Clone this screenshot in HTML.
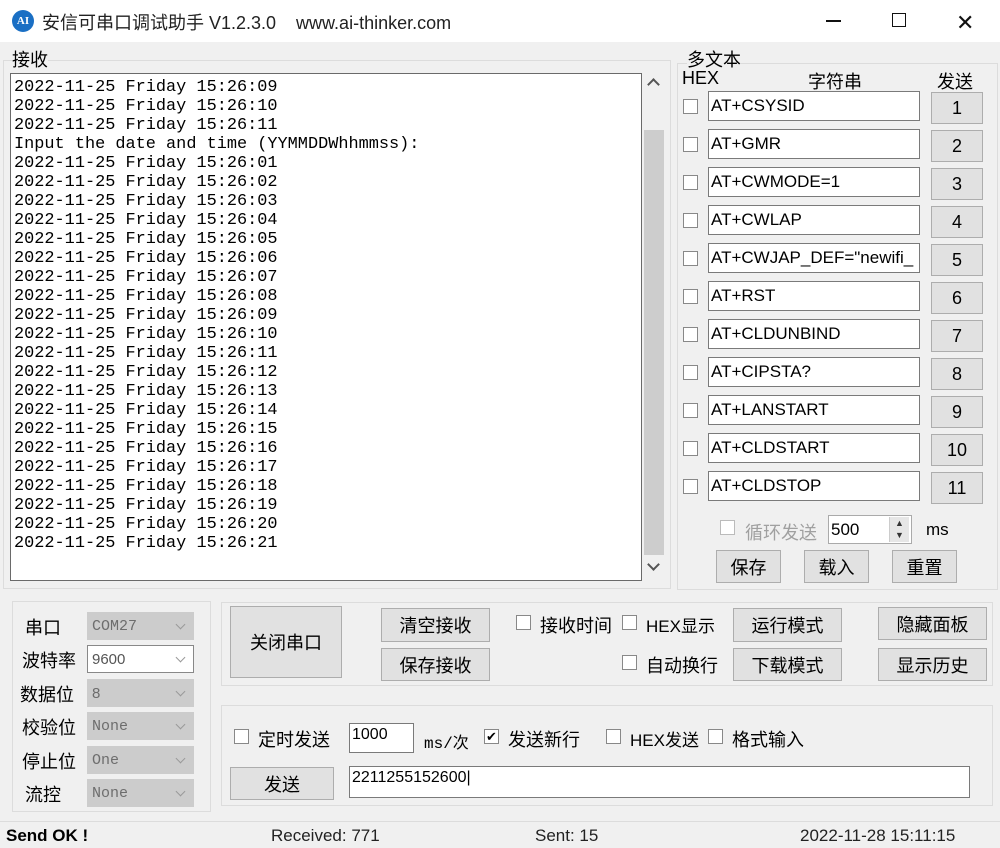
<!DOCTYPE html>
<html><head><meta charset="utf-8">
<style>
*{box-sizing:border-box;margin:0;padding:0}
body{width:1000px;height:848px;background:#f0f0f0;position:relative;overflow:hidden;font-family:"Liberation Sans","Noto Sans CJK SC",sans-serif;font-size:17px;color:#000}
.a{position:absolute}
.btn{position:absolute;background:#e1e1e1;border:1px solid #adadad;display:flex;align-items:center;justify-content:center;font-size:18px}
.inp{position:absolute;background:#fff;border:1px solid #7a7a7a;font-size:17px;padding-left:2px;display:flex;align-items:center;white-space:nowrap;overflow:hidden}
.cb{position:absolute;width:15px;height:15px;background:#fff;border:1px solid #333}
.grp{position:absolute;border:1px solid #dcdcdc}
.cmb{position:absolute;background:#ccc;border:1px solid #ccc;font-family:"Liberation Mono",monospace;font-size:15px;color:#6d6d6d;padding-left:4px;display:flex;align-items:center}
.cmb:after{content:"";position:absolute;right:9px;top:8px;width:6px;height:6px;border-right:1px solid #999;border-bottom:1px solid #999;transform:rotate(45deg)}
.lbl{position:absolute;font-size:18px}
</style></head><body>
<div class="a" style="left:0;top:0;width:1000px;height:42px;background:#fff"></div>
<div class="a" style="left:12px;top:10px;width:22px;height:22px;border-radius:50%;background:#1a6fc4;color:#fff;font:bold 11px 'Liberation Serif',serif;display:flex;align-items:center;justify-content:center">AI</div>
<div class="a" style="left:42px;top:9px;font-size:18px;color:#222">安信可串口调试助手 V1.2.3.0 &nbsp;&nbsp;&nbsp;www.ai-thinker.com</div>
<div class="a" style="left:826px;top:20px;width:15px;height:1.5px;background:#111"></div>
<div class="a" style="left:892px;top:13px;width:14px;height:14px;border:1.5px solid #111"></div>
<div class="a" style="left:956px;top:10px;font-size:22px;color:#111">✕</div>

<div class="grp" style="left:3px;top:60px;width:668px;height:529px"></div>
<div class="a" style="left:12px;top:46px;font-size:18px;background:#f0f0f0">接收</div>
<div class="a" style="left:10px;top:73px;width:632px;height:508px;background:#fff;border:1px solid #6a6a6a;padding:4px 0 0 3px;font-family:'Liberation Mono',monospace;font-size:16.9px;line-height:19px;white-space:pre">2022-11-25 Friday 15:26:09
2022-11-25 Friday 15:26:10
2022-11-25 Friday 15:26:11
Input the date and time (YYMMDDWhhmmss):
2022-11-25 Friday 15:26:01
2022-11-25 Friday 15:26:02
2022-11-25 Friday 15:26:03
2022-11-25 Friday 15:26:04
2022-11-25 Friday 15:26:05
2022-11-25 Friday 15:26:06
2022-11-25 Friday 15:26:07
2022-11-25 Friday 15:26:08
2022-11-25 Friday 15:26:09
2022-11-25 Friday 15:26:10
2022-11-25 Friday 15:26:11
2022-11-25 Friday 15:26:12
2022-11-25 Friday 15:26:13
2022-11-25 Friday 15:26:14
2022-11-25 Friday 15:26:15
2022-11-25 Friday 15:26:16
2022-11-25 Friday 15:26:17
2022-11-25 Friday 15:26:18
2022-11-25 Friday 15:26:19
2022-11-25 Friday 15:26:20
2022-11-25 Friday 15:26:21</div>
<div class="a" style="left:642px;top:73px;width:24px;height:508px;background:#f0f0f0"></div>
<div class="a" style="left:644px;top:130px;width:20px;height:425px;background:#cdcdcd"></div>
<div class="a" style="left:649px;top:80px;width:9px;height:9px;border-left:2px solid #555;border-top:2px solid #555;transform:rotate(45deg)"></div>
<div class="a" style="left:649px;top:560px;width:9px;height:9px;border-right:2px solid #555;border-bottom:2px solid #555;transform:rotate(45deg)"></div>

<div class="grp" style="left:677px;top:63px;width:321px;height:527px"></div>
<div class="a" style="left:687px;top:46px;font-size:18px;background:#f0f0f0">多文本</div>
<div class="a" style="left:682px;top:68px;font-size:18px">HEX</div>
<div class="a" style="left:808px;top:68px;font-size:18px">字符串</div>
<div class="a" style="left:937px;top:68px;font-size:18px">发送</div>

<div class="cb" style="left:683px;top:99px;border-color:#888"></div><div class="inp" style="left:708px;top:91px;width:212px;height:30px">AT+CSYSID</div><div class="btn" style="left:931px;top:92px;width:52px;height:32px">1</div>
<div class="cb" style="left:683px;top:137px;border-color:#888"></div><div class="inp" style="left:708px;top:129px;width:212px;height:30px">AT+GMR</div><div class="btn" style="left:931px;top:130px;width:52px;height:32px">2</div>
<div class="cb" style="left:683px;top:175px;border-color:#888"></div><div class="inp" style="left:708px;top:167px;width:212px;height:30px">AT+CWMODE=1</div><div class="btn" style="left:931px;top:168px;width:52px;height:32px">3</div>
<div class="cb" style="left:683px;top:213px;border-color:#888"></div><div class="inp" style="left:708px;top:205px;width:212px;height:30px">AT+CWLAP</div><div class="btn" style="left:931px;top:206px;width:52px;height:32px">4</div>
<div class="cb" style="left:683px;top:251px;border-color:#888"></div><div class="inp" style="left:708px;top:243px;width:212px;height:30px">AT+CWJAP_DEF="newifi_</div><div class="btn" style="left:931px;top:244px;width:52px;height:32px">5</div>
<div class="cb" style="left:683px;top:289px;border-color:#888"></div><div class="inp" style="left:708px;top:281px;width:212px;height:30px">AT+RST</div><div class="btn" style="left:931px;top:282px;width:52px;height:32px">6</div>
<div class="cb" style="left:683px;top:327px;border-color:#888"></div><div class="inp" style="left:708px;top:319px;width:212px;height:30px">AT+CLDUNBIND</div><div class="btn" style="left:931px;top:320px;width:52px;height:32px">7</div>
<div class="cb" style="left:683px;top:365px;border-color:#888"></div><div class="inp" style="left:708px;top:357px;width:212px;height:30px">AT+CIPSTA?</div><div class="btn" style="left:931px;top:358px;width:52px;height:32px">8</div>
<div class="cb" style="left:683px;top:403px;border-color:#888"></div><div class="inp" style="left:708px;top:395px;width:212px;height:30px">AT+LANSTART</div><div class="btn" style="left:931px;top:396px;width:52px;height:32px">9</div>
<div class="cb" style="left:683px;top:441px;border-color:#888"></div><div class="inp" style="left:708px;top:433px;width:212px;height:30px">AT+CLDSTART</div><div class="btn" style="left:931px;top:434px;width:52px;height:32px">10</div>
<div class="cb" style="left:683px;top:479px;border-color:#888"></div><div class="inp" style="left:708px;top:471px;width:212px;height:30px">AT+CLDSTOP</div><div class="btn" style="left:931px;top:472px;width:52px;height:32px">11</div>

<div class="cb" style="left:720px;top:520px;border-color:#bbb"></div>
<div class="lbl" style="left:745px;top:519px;color:#a0a0a0">循环发送</div>
<div class="inp" style="left:828px;top:515px;width:84px;height:29px;border-color:#aaa">500</div>
<div class="a" style="left:889px;top:517px;width:20px;height:25px;background:#e6e6e6;border-left:1px solid #ccc;font-size:9px;line-height:12px;text-align:center;color:#333">▲<br>▼</div>
<div class="lbl" style="left:926px;top:520px;font-size:17px">ms</div>
<div class="btn" style="left:716px;top:550px;width:65px;height:33px">保存</div>
<div class="btn" style="left:804px;top:550px;width:65px;height:33px">载入</div>
<div class="btn" style="left:892px;top:550px;width:65px;height:33px">重置</div>

<div class="grp" style="left:12px;top:601px;width:199px;height:211px"></div>
<div class="lbl" style="left:25px;top:614px">串口</div><div class="cmb" style="left:87px;top:612px;width:107px;height:28px">COM27</div>
<div class="lbl" style="left:22px;top:647px">波特率</div><div class="cmb" style="left:87px;top:645px;width:107px;height:28px;background:#fff;border-color:#888;color:#555;font-family:'Liberation Sans',sans-serif">9600</div>
<div class="lbl" style="left:20px;top:681px">数据位</div><div class="cmb" style="left:87px;top:679px;width:107px;height:28px;font-family:'Liberation Sans',sans-serif">8</div>
<div class="lbl" style="left:22px;top:714px">校验位</div><div class="cmb" style="left:87px;top:712px;width:107px;height:28px">None</div>
<div class="lbl" style="left:22px;top:748px">停止位</div><div class="cmb" style="left:87px;top:746px;width:107px;height:28px">One</div>
<div class="lbl" style="left:25px;top:781px">流控</div><div class="cmb" style="left:87px;top:779px;width:107px;height:28px">None</div>

<div class="grp" style="left:221px;top:602px;width:772px;height:84px"></div>
<div class="btn" style="left:230px;top:606px;width:112px;height:72px">关闭串口</div>
<div class="btn" style="left:381px;top:608px;width:109px;height:34px">清空接收</div>
<div class="btn" style="left:381px;top:648px;width:109px;height:33px">保存接收</div>
<div class="cb" style="left:516px;top:615px;border-color:#888"></div><div class="lbl" style="left:540px;top:612px">接收时间</div>
<div class="cb" style="left:622px;top:615px;border-color:#888"></div><div class="lbl" style="left:646px;top:612px;font-size:17px">HEX显示</div>
<div class="cb" style="left:622px;top:655px;border-color:#888"></div><div class="lbl" style="left:646px;top:652px">自动换行</div>
<div class="btn" style="left:733px;top:608px;width:109px;height:34px">运行模式</div>
<div class="btn" style="left:733px;top:648px;width:109px;height:33px">下载模式</div>
<div class="btn" style="left:878px;top:607px;width:109px;height:33px">隐藏面板</div>
<div class="btn" style="left:878px;top:648px;width:109px;height:33px">显示历史</div>

<div class="grp" style="left:221px;top:705px;width:772px;height:101px"></div>
<div class="cb" style="left:234px;top:729px;border-color:#888"></div><div class="lbl" style="left:258px;top:726px">定时发送</div>
<div class="inp" style="left:349px;top:723px;width:65px;height:30px;align-items:flex-start;padding-top:2px;font-size:16px">1000</div>
<div class="lbl" style="left:424px;top:729px;font-size:16px;font-family:'Liberation Mono','Noto Sans CJK SC',monospace">ms/次</div>
<div class="cb" style="left:484px;top:729px;border-color:#888;font-size:13px;line-height:13px;text-align:center">✔</div><div class="lbl" style="left:508px;top:726px">发送新行</div>
<div class="cb" style="left:606px;top:729px;border-color:#888"></div><div class="lbl" style="left:630px;top:726px;font-size:17px">HEX发送</div>
<div class="cb" style="left:708px;top:729px;border-color:#888"></div><div class="lbl" style="left:732px;top:726px">格式输入</div>
<div class="btn" style="left:230px;top:767px;width:104px;height:33px">发送</div>
<div class="inp" style="left:349px;top:766px;width:621px;height:32px;align-items:flex-start;padding-top:2px;font-size:16px">2211255152600|</div>

<div class="a" style="left:0;top:821px;width:1000px;height:1px;background:#dcdcdc"></div>
<div class="a" style="left:6px;top:826px;font-size:17px;font-weight:bold">Send OK !</div>
<div class="a" style="left:271px;top:826px;font-size:17px;color:#222">Received: 771</div>
<div class="a" style="left:535px;top:826px;font-size:17px;color:#222">Sent: 15</div>
<div class="a" style="left:800px;top:826px;font-size:17px;color:#222">2022-11-28 15:11:15</div>
</body></html>
